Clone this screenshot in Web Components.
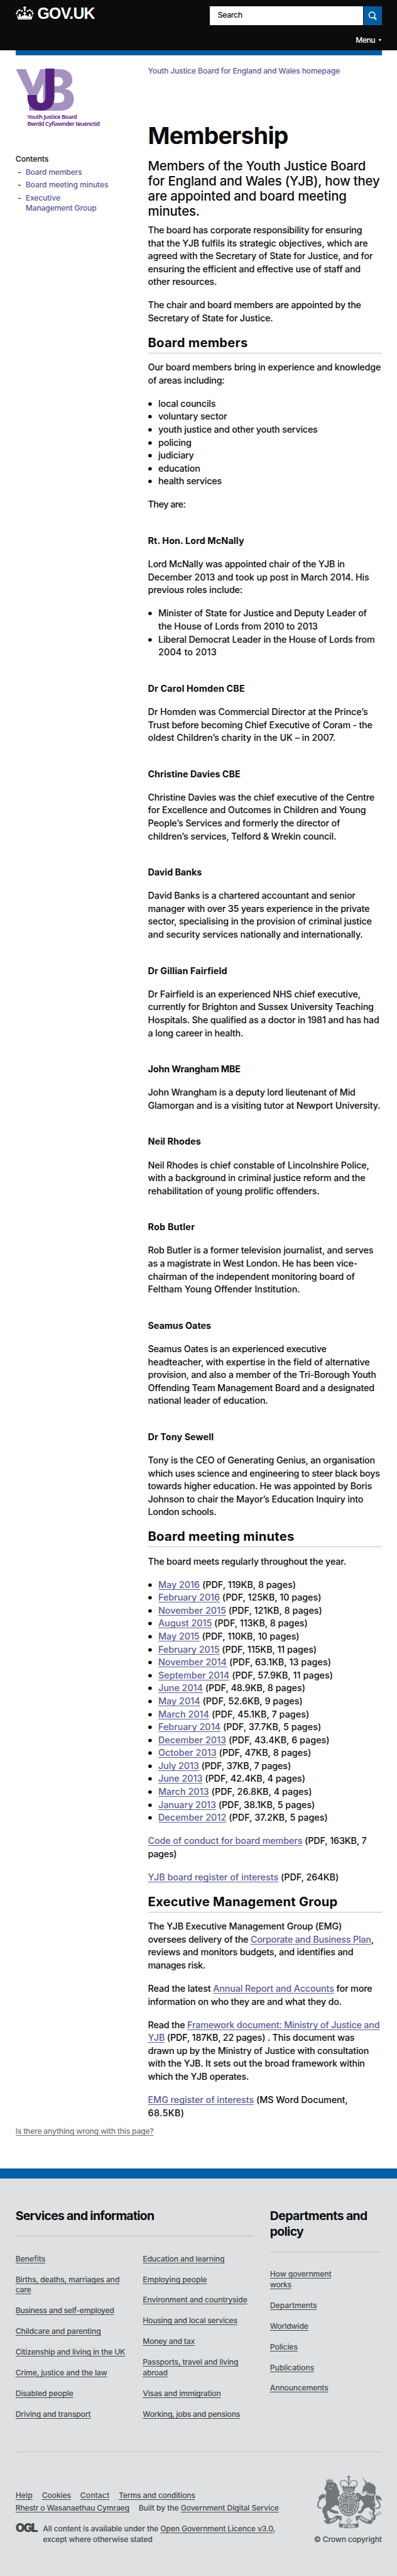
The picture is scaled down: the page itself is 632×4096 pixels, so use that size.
<!DOCTYPE html>
<html lang="en">
<head>
<meta charset="utf-8">
<title>Membership - Youth Justice Board for England and Wales - GOV.UK</title>
<style>
/* 1rem = 100 layout units */
html{font-size:82.35px;background:#fff}
body{margin:0;font-family:Inter,Roboto,"Liberation Sans",sans-serif;font-weight:450;color:#0b0c0c;overflow-x:hidden;font-size:.174rem;line-height:.25rem}
</style>
</head>
<body>
<gov-page></gov-page>
<script>
const esc = s => s.replace(/&/g, '&amp;');
const line = (w, s) => `<text-line measure="${w}">${esc(s).replace(/\[(.+?)\]/g, '<a href="#">$1</a>')}</text-line>`;
const lines = s => s.trim().split('\n').map(l => { const i = l.indexOf('|'); return line(l.slice(0, i).trim(), l.slice(i + 1)); }).join('');
const LINK = `a{color:var(--link,#5a5c98);text-decoration:underline;text-decoration-thickness:1px;text-underline-offset:.02rem;text-decoration-skip-ink:none}`;

function component(name, html) {
  customElements.define(name, class extends HTMLElement {
    connectedCallback() {
      if (this.shadowRoot) return;
      const t = document.createElement('template');
      t.innerHTML = html;
      this.attachShadow({ mode: 'open' }).append(t.content.cloneNode(true));
    }
  });
}

component('gov-page', `
<style>
:host{display:flex;flex-direction:column;width:7.68rem;height:49.74rem;overflow:hidden}
.bar{height:.1rem;background:#005ea5;margin:0 .3rem}
main{display:grid;grid-template-columns:2.56rem 4.52rem;padding:.21rem .3rem 0}
.wrong{margin:.1345rem .3rem .612rem;font-size:.148rem;line-height:.2rem;--link:#6f777b}
page-footer{flex:1}
${LINK}
</style>
<gov-header></gov-header>
<div class="bar"></div>
<main><side-bar></side-bar><page-article></page-article></main>
<div class="wrong">${line(267, '[Is there anything wrong with this page?]')}</div>
<page-footer></page-footer>`);

component('gov-header', `
<style>
:host{display:block;background:#0b0c0c;height:.97rem;padding:.12rem .3rem 0;box-sizing:border-box;color:#fff}
.top{display:flex;justify-content:space-between}
.logo{display:flex}
.crown{width:.35rem;height:.26rem;display:block}
.name{font:700 .302rem/.3rem "Liberation Sans",sans-serif;margin:-.013rem 0 0 .072rem}
.search{display:flex;gap:.01rem}
.field{width:2.96rem;height:.36rem;box-sizing:border-box;background:#fff;color:#0b0c0c;padding:.077rem .15rem;font-size:.148rem;line-height:.2rem}
.go{width:.35rem;height:.36rem;background:#005ea5}
.go svg{width:100%;height:100%;display:block}
.menu{display:flex;justify-content:flex-end;align-items:center;gap:.07rem;font-size:.148rem;line-height:.2rem;font-weight:550;margin-top:.197rem}
.menu i{border:.03rem solid transparent;border-top:.055rem solid #fff;border-bottom:0;margin-right:.01rem}
</style>
<div class="top">
<div class="logo">
<svg class="crown" viewBox="91 36 105 78" fill="#fff"><path d="M140 36h7v5h5v7h-5v5q4 3 0 10h-7q-4-7 0-10v-5h-5v-7h5z"/><circle cx="97" cy="77" r="5.5"/><circle cx="102" cy="65" r="5.5"/><circle cx="113" cy="58" r="6"/><circle cx="126" cy="62" r="5.5"/><circle cx="190" cy="77" r="5.5"/><circle cx="185" cy="65" r="5.5"/><circle cx="174" cy="58" r="6"/><circle cx="161" cy="62" r="5.5"/><path d="M97 86q8 5 10 12l4-1q1-6-4-10l9-10 5 9q-3 8 2 10 6 1 8-9l7 4q4-4 2-11l-5 1v-8l5 1v-5h7v5l5-1v8l-5-1q-2 7 2 11l7-4q2 10 8 9 5-2 2-10l5-9 9 10q-5 4-4 10l4 1q2-7 10-12l-7 28h-78z"/><path d="M108 108q36-5 71 0" stroke="#0b0c0c" stroke-width="1.5" fill="none"/></svg>
<div class="name">${line(111, 'GOV.UK')}</div>
</div>
<div class="search"><div class="field">${line(47.5, 'Search')}</div><div class="go"><svg viewBox="0 0 35 36" fill="none" stroke="#fff"><circle cx="16" cy="16.8" r="5.7" stroke-width="2"/><path d="M20 21.3l4.3 4.3" stroke-width="2.8"/></svg></div></div>
</div>
<div class="menu">${line(37.5, 'Menu')}<i></i></div>`);

component('yjb-logo', `
<style>
:host{display:block;height:1.1rem}
.mark{display:block;width:1.12rem;height:.8rem;overflow:visible}
.caption{font:600 .112rem/.137rem "Noto Sans","Open Sans",sans-serif;color:#54217f;margin:.043rem 0 0 .227rem}
</style>
<svg class="mark" viewBox="90 402 336 240" font-family="Inter,sans-serif" font-weight="800" font-size="330">
<g fill="#a692c1"><text x="85" y="642" textLength="210" lengthAdjust="spacingAndGlyphs">Y</text><text x="232" y="642" textLength="205" lengthAdjust="spacingAndGlyphs">B</text></g>
<text x="150" y="638" fill="#54217f" textLength="182" lengthAdjust="spacingAndGlyphs">J</text></svg>
<div class="caption">${line(96, 'Youth Justice Board')}${line(140, 'Bwrdd Cyfiawnder Ieuenctid')}</div>`);

component('side-bar', `
<style>
:host{display:block;font-size:.148rem;line-height:.2rem}
yjb-logo{margin-top:.06rem}
h2{font:inherit;margin:.535rem 0 .05rem}
ul{list-style:none;margin:0;padding:0}
li{display:flex;margin-bottom:.05rem;padding-left:.04rem}
li::before{content:"-";width:.155rem}
${LINK} a{text-decoration:none}
</style>
<yjb-logo></yjb-logo>
<h2>${line(64, 'Contents')}</h2>
<ul>
<li>${line(109, '[Board members]')}</li>
<li>${line(160, '[Board meeting minutes]')}</li>
<li><div>${line(67, '[Executive]')}${line(137, '[Management Group]')}</div></li>
</ul>`);

const ARTICLE = `
p
414|The board has corporate responsibility for ensuring
425|that the YJB fulfils its strategic objectives, which are
434.5|agreed with the Secretary of State for Justice, and for
411|ensuring the efficient and effective use of staff and
133|other resources.

p
412|The chair and board members are appointed by the
241.5|Secretary of State for Justice.

h2
193|Board members

p
450|Our board members bring in experience and knowledge
148|of areas including:

ul
111|local councils
133|voluntary sector
308|youth justice and other youth services
64|policing
68.7|judiciary
81|education
122.5|health services

p
72.7|They are:

h3
186|Rt. Hon. Lord McNally

p
380.3|Lord McNally was appointed chair of the YJB in
427.7|December 2013 and took up post in March 2014. His
182.7|previous roles include:

ul
403|Minister of State for Justice and Deputy Leader of
+308|the House of Lords from 2010 to 2013
418.3|Liberal Democrat Leader in the House of Lords from
+112.7|2004 to 2013

h3
187.3|Dr Carol Homden CBE

p
425.3|Dr Homden was Commercial Director at the Prince’s
433.7|Trust before becoming Chief Executive of Coram - the
362.7|oldest Children’s charity in the UK – in 2007.

h3
178.7|Christine Davies CBE

p
437.7|Christine Davies was the chief executive of the Centre
421.3|for Excellence and Outcomes in Children and Young
371.3|People’s Services and formerly the director of
364|children’s services, Telford & Wrekin council.

h3
104|David Banks

p
401|David Banks is a chartered accountant and senior
428.3|manager with over 35 years experience in the private
432.7|sector, specialising in the provision of criminal justice
415.3|and security services nationally and internationally.

h3
153|Dr Gillian Fairfield

p
411|Dr Fairfield is an experienced NHS chief executive,
436.3|currently for Brighton and Sussex University Teaching
447|Hospitals. She qualified as a doctor in 1981 and has had
184|a long career in health.

h3
179|John Wrangham MBE

p
401|John Wrangham is a deputy lord lieutenant of Mid
449.3|Glamorgan and is a visiting tutor at Newport University.

h3
102.3|Neil Rhodes

p
427.7|Neil Rhodes is chief constable of Lincolnshire Police,
420|with a background in criminal justice reform and the
331.7|rehabilitation of young prolific offenders.

h3
90.7|Rob Butler

p
435.7|Rob Butler is a former television journalist, and serves
405|as a magistrate in West London. He has been vice-
399.7|chairman of the independent monitoring board of
294|Feltham Young Offender Institution.

h3
122|Seamus Oates

p
345|Seamus Oates is an experienced executive
428.7|headteacher, with expertise in the field of alternative
441|provision, and also a member of the Tri-Borough Youth
437.7|Offending Team Management Board and a designated
232|national leader of education.

h3
127|Dr Tony Sewell

p
439|Tony is the CEO of Generating Genius, an organisation
448.3|which uses science and engineering to steer black boys
433|towards higher education. He was appointed by Boris
416.3|Johnson to chair the Mayor’s Education Inquiry into
132|London schools.

h2
283|Board meeting minutes

p
383|The board meets regularly throughout the year.

ul
266|[May 2016] (PDF, 119KB, 8 pages)
315|[February 2016] (PDF, 125KB, 10 pages)
316.7|[November 2015] (PDF, 121KB, 8 pages)
288.7|[August 2015] (PDF, 113KB, 8 pages)
272.7|[May 2015] (PDF, 110KB, 10 pages)
306|[February 2015] (PDF, 115KB, 11 pages)
334|[November 2014] (PDF, 63.1KB, 13 pages)
337.7|[September 2014] (PDF, 57.9KB, 11 pages)
284|[June 2014] (PDF, 48.9KB, 8 pages)
279|[May 2014] (PDF, 52.6KB, 9 pages)
291.7|[March 2014] (PDF, 45.1KB, 7 pages)
314.7|[February 2014] (PDF, 37.7KB, 5 pages)
331|[December 2013] (PDF, 43.4KB, 6 pages)
295.3|[October 2013] (PDF, 47KB, 8 pages)
256.3|[July 2013] (PDF, 37KB, 7 pages)
284|[June 2013] (PDF, 42.4KB, 4 pages)
297|[March 2013] (PDF, 26.8KB, 4 pages)
302.7|[January 2013] (PDF, 38.1KB, 5 pages)
327.7|[December 2012] (PDF, 37.2KB, 5 pages)

p
422.7|[Code of conduct for board members] (PDF, 163KB, 7
55.7|pages)

p
368.7|[YJB board register of interests] (PDF, 264KB)

h2
366.7|Executive Management Group

p
374.7|The YJB Executive Management Group (EMG)
436.3|oversees delivery of the [Corporate and Business Plan],
397|reviews and monitors budgets, and identifies and
110.7|manages risk.

p
433.7|Read the latest [Annual Report and Accounts] for more
374.3|information on who they are and what they do.

p
448|Read the [Framework document: Ministry of Justice and]
399.3|[YJB] (PDF, 187KB, 22 pages) . This document was
427|drawn up by the Ministry of Justice with consultation
419.3|with the YJB. It sets out the broad framework within
195|which the YJB operates.

p
386.3|[EMG register of interests] (MS Word Document,
70.3|68.5KB)`;

/* A list row that starts with "+" continues the item above it. */
const blocks = ARTICLE.trim().split('\n\n').map(b => {
  const i = b.indexOf('\n'), tag = b.slice(0, i), body = b.slice(i + 1);
  const inner = tag === 'ul'
    ? body.replace(/\n\+/g, '\u0001').split('\n').map(r => `<li>${lines(r.replace(/\u0001/g, '\n'))}</li>`).join('')
    : lines(body);
  return `<${tag}>${inner}</${tag}>`;
}).join('');

component('page-article', `
<style>
:host{display:block}
.home{font-size:.148rem;line-height:.2rem}
h1{font-size:.455rem;line-height:.5rem;margin:.892rem 0 .191rem}
.intro{font-size:.247rem;line-height:.291rem;margin-bottom:.0965rem}
p,ul{margin:0 0 .2rem;padding:0;list-style:none}
p:last-child{margin:0}
h2{font-size:.245rem;line-height:.3rem;padding-bottom:.04rem;border-bottom:1px solid #bfc1c3;margin:.2rem 0 .147rem}
h3{font-size:inherit;margin:.45rem 0 .2rem}
li{padding-left:.2rem;background:radial-gradient(circle at .035rem .127rem,#0b0c0c .03rem,transparent .038rem)}
${LINK} .home a{text-decoration:none}
</style>
<div class="home">${line(371, '[Youth Justice Board for England and Wales homepage]')}</div>
<h1>${line(271, 'Membership')}</h1>
<div class="intro">${lines(`421|Members of the Youth Justice Board
448|for England and Wales (YJB), how they
384|are appointed and board meeting
100|minutes.`)}</div>
${blocks}`);

const links = s => '<ul>' + s.trim().split('\n').map(r => `<li>${r.split('/').map(p => { const [w, t] = p.split('|'); return line(w, `[${t}]`); }).join('')}</li>`).join('') + '</ul>';

component('royal-arms', `
<style>:host{display:block;width:1.253rem;height:1.017rem}svg{display:block;width:100%;height:100%}</style>
<svg viewBox="128 57 376 305" fill="#6f777b">
<path d="M181 78l8 12 3-14 6 13 4-17 5 17 8-12 1 15 7-6-5 22h-36z"/>
<g fill="#dee0e2"><circle cx="191" cy="93" r="3"/><circle cx="201" cy="91" r="3"/><circle cx="211" cy="93" r="3"/></g>
<path d="M181 103l32-5q12 0 20 2l10 14 4 18 10 20-4 8 8 12-14 12 2 20 8 14 10 6-4 14-18-6-14-2-10 10-12 4 2 10 22 8 16 4 4 12-24 0-22-8-18-12-4 14 4 14 6 16 12 4-2 10-22 0-12-12-6-20-8-22 4-18 14-14 6-16-6-20 6-34-4-14-8-12 6-12z"/>
<path d="M152 246q-22 3-20-20 2-24 24-38 14-8 14-20" fill="none" stroke="#6f777b" stroke-width="7"/>
<path d="M134 194q2-16 14-22l18-11-3 15q12-4 13-14 6 20-8 26-14 4-34 6z"/>
<path d="M188 118l10 3M210 116l12-1M196 134l16 2" stroke="#dee0e2" stroke-width="3"/>
<g fill="none" stroke="#6f777b" stroke-width="6" stroke-dasharray="6 2"><path d="M278 132q-26-32-10-42 28-14 42 22M344 132q26-32 10-42-28-14-42 22"/><path d="M311 84v44"/></g>
<path d="M308 57h6v6h7v7h-7v8h-6v-8h-7v-7h7z"/><circle cx="311" cy="83" r="6"/>
<path d="M274 122l10-8 4 12 12-10 5 12 6-14 6 14 5-12 12 10 4-12 10 8-4 28q-33-12-66 0z"/>
<path d="M282 139q29-8 58 0" stroke="#dee0e2" stroke-width="3" fill="none"/>
<ellipse cx="311" cy="220" rx="61" ry="73"/>
<ellipse cx="311" cy="219" rx="40" ry="51" fill="#dee0e2"/>
<ellipse cx="311" cy="219" rx="37" ry="47"/>
<path d="M311 171v96M274 219h74" stroke="#dee0e2" stroke-width="5"/>
<path d="M311 171v96M274 219h74" stroke="#6f777b" stroke-width="2"/>
<g stroke="#dee0e2" stroke-width="3" stroke-dasharray="7 3"><path d="M284 192h23M280 202h27M280 212h27M317 230h27M317 240h25M317 250h19"/></g>
<g fill="none" stroke="#dee0e2" stroke-width="2.5"><path d="M319 186h16l4 24h-20zM283 231q8 20 20 27M291 229v24M299 229v29M325 192q8 4 4 14"/></g>
<ellipse cx="311" cy="220" rx="51" ry="62" fill="none" stroke="#dee0e2" stroke-width="10" stroke-dasharray="3 3.5 7 3 2 4"/>
<path d="M387 64l34 38-8 8z"/><path d="M389 68l26 34" stroke="#dee0e2" stroke-width="1"/>
<path d="M394 126l14-22 16-6 8-5 3 8 20 8 12 16-2 26 3 8-8 20 2 30 4 20-8 22-20-2-14-8-20 8-12 18-14 12-14-4 2-10 14-4 6-20 12-18-6-12-10-14-14 14-16-4-6-12 16 2 6-12-12-16-2-12 18 4 18 16 16-2 10-20-2-10-14 8-10-2z"/>
<path d="M434 230l28 6 2 26-6 16 10 16-4 22-26-2 4-10 14-4-8-18 2-20-16-12z"/>
<path d="M404 152q22 22 52 16" stroke="#dee0e2" stroke-width="9" fill="none"/><path d="M405 152q22 22 50 16" stroke="#6f777b" stroke-width="4" stroke-dasharray="5 4" fill="none"/>
<circle cx="411" cy="114" r="2.5" fill="#dee0e2"/>
<path d="M468 248q28 2 24-20-4-18-18-30-8-14 4-18" fill="none" stroke="#6f777b" stroke-width="7"/><path d="M466 184q2-16 16-10 16 6 22 29l-14-5q-16-2-24-14z"/>
<g fill="#dee0e2" stroke="#6f777b" stroke-width="3"><circle cx="436" cy="275" r="6"/><circle cx="447" cy="289" r="7"/><circle cx="474" cy="285" r="6"/><circle cx="489" cy="276" r="8"/><circle cx="455" cy="212" r="5"/><circle cx="459" cy="242" r="5"/><circle cx="393" cy="157" r="6"/></g>
<path d="M166 316q24 8 76-28l30 6 4 20-16 4-6-10q-34 30-66 30-14-2-22-22zM456 316q-24 8-76-28l-30 6-4 20 16 4 6-10q34 30 66 30 14-2 22-22z"/>
<path d="M262 300q14 6 2 20-12 10-8 22v14q54 12 110 0v-14q4-12-8-22-12-14 2-20" fill="#dee0e2" stroke="#6f777b" stroke-width="3"/>
<path d="M256 334q54 14 110 0v22q-54 12-110 0z"/>
<path d="M311 300l7 10-4 8q10-6 13 4-2 8-12 4l3 10h-14l3-10q-10 4-12-4 3-10 13-4l-4-8z" fill="#dee0e2" stroke="#6f777b" stroke-width="3"/>
<g fill="#eceeef" font-family="Roboto,sans-serif" font-weight="700" font-size="19" text-anchor="middle"><text transform="translate(223 321) rotate(-27)">DIEU</text><text x="311" y="358">ET MON</text><text transform="translate(396 319) rotate(27)">DROIT</text></g>
</svg>`);

component('page-footer', `
<style>
:host{display:block;background:#dee0e2;border-top:.2rem solid #005ea5;padding:.571rem .3rem 0;color:#454a4c;--link:#454a4c;font-size:.148rem;line-height:.2rem}
.cols{display:grid;grid-template-columns:4.617rem 2.16rem;column-gap:.303rem;border-bottom:1px solid #bfc1c3;padding-bottom:.417rem}
h2{color:#0b0c0c;font-size:.235rem;line-height:.3rem;margin:0 0 .337rem;padding-bottom:.23rem;border-bottom:1px solid #bfc1c3}
.two{display:grid;grid-template-columns:2.46rem 2.1rem}
ul{list-style:none;margin:0;padding:0}
li{margin-bottom:.2rem}
.meta{display:flex;justify-content:space-between;padding-top:.45rem;height:1.34rem}
.left{padding-top:.27rem}
.row{display:flex;gap:.18rem;line-height:.245rem}
.licence{display:flex;margin-top:.178rem}
.ogl{width:.53rem;font:900 .23rem/.17rem Inter,sans-serif}
.right{display:flex;flex-direction:column;align-items:flex-end}
.right div{margin-top:.121rem}
${LINK}
</style>
<div class="cols">
<section><h2>${line(268, 'Services and information')}</h2>
<div class="two">${links(`57.8|Benefits
201|Births, deaths, marriages and/30|care
190.5|Business and self-employed
165|Childcare and parenting
212|Citizenship and living in the UK
177|Crime, justice and the law
111.7|Disabled people
145.5|Driving and transport`)}${links(`158|Education and learning
124|Employing people
202|Environment and countryside
182.7|Housing and local services
100.4|Money and tax
184.6|Passports, travel and living/48|abroad
151|Visas and immigration
188|Working, jobs and pensions`)}</div></section>
<section><h2>${line(188, 'Departments and')}${line(64.5, 'policy')}</h2>
${links(`118.5|How government/41|works
90.6|Departments
74|Worldwide
53.4|Policies
85|Publications
112.6|Announcements`)}</section>
</div>
<div class="meta">
<div class="left">
<div class="row">${line(33, '[Help]')}${line(56.2, '[Cookies]')}${line(56.3, '[Contact]')}${line(147.7, '[Terms and conditions]')}</div>
<div class="row">${line(220, '[Rhestr o Wasanaethau Cymraeg]')}${line(271, 'Built by the [Government Digital Service]')}</div>
<div class="licence"><div class="ogl">${line(41, 'OGL')}</div><div>${line(449, 'All content is available under the [Open Government Licence v3.0],')}${line(211.5, 'except where otherwise stated')}</div></div>
</div>
<div class="right"><royal-arms></royal-arms><div>${line(131, '© Crown copyright')}</div></div>
</div>`);

/* One line of copy, tracked to its measure (in layout units). */
customElements.define('text-line', class extends HTMLElement {
  connectedCallback() {
    if (this.shadowRoot) return;
    const root = this.attachShadow({ mode: 'open' });
    root.innerHTML = '<style>:host{display:block;white-space:nowrap}</style><span><slot></slot></span>';
    const want = parseFloat(this.getAttribute('measure')) * 0.8235;
    const have = root.querySelector('span').getBoundingClientRect().width;
    this.style.letterSpacing = ((want - have) / this.textContent.length).toFixed(4) + 'px';
  }
});
</script>
</body>
</html>
